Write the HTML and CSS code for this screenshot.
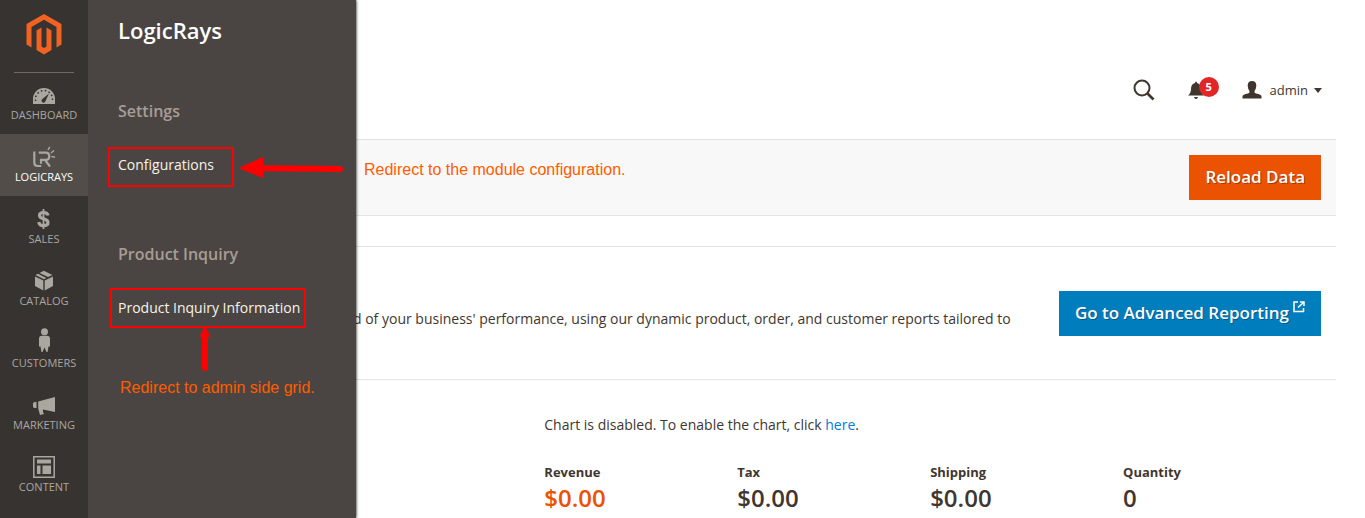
FILE: index.html
```html
<!DOCTYPE html>
<html lang="en">
<head>
<meta charset="utf-8">
<title>Dashboard</title>
<link rel="stylesheet" href="styles.css">
</head>
<body>
<div class="page">
  <aside class="sidebar">
    <a class="logo" href="#" aria-label="Magento">
      <svg width="36" height="41" viewBox="0 0 36 41"><path fill="#f26322" d="M18 0 35.500 10V30.500L30.500 33.500V13L18 5.800 5.500 13V33.500L.500 30.500V10ZM15.500 13.500V32.500L18 34 20.500 32.500V13.500L25.500 16.500V36L18 40.500 10.500 36V16.500Z"/></svg>
    </a>
    <nav>
      <ul class="menu">
        <li><a href="#"><svg class="icon" viewBox="0 0 24 24"><path fill="currentColor" d="M1 21V16A11 11 0 0 1 23 16V21Z"/><path fill="none" stroke="#373330" stroke-width="1.500" stroke-dasharray="1.600 2.400" d="M3.500 18V16A8.500 8.500 0 0 1 20.500 16V18"/><path fill="#373330" d="M17 10.500 13.500 18A2 2 0 1 1 10.700 15.800Z"/></svg>Dashboard</a></li>
        <li class="active"><a href="#"><svg class="icon" viewBox="0 0 24 24"><path fill="none" stroke="currentColor" stroke-width="2.200" d="M2.300 6.500V17.500Q2.300 21 5.500 21H9.200M6.800 7.600H14Q17.300 7.600 17.300 11.200T14 14.800H9V18.800M13 15 18 21.500"/><path fill="none" stroke="currentColor" stroke-width="1.500" d="M16 5 17.800 1.800M19 8 22 5.500M19.500 11.500 23 12.300"/></svg>LogicRays</a></li>
        <li><a href="#"><svg class="icon" viewBox="0 0 24 24"><path fill="none" stroke="currentColor" stroke-width="3.200" d="M16 8.500Q15.500 5.500 11.500 5.500 7.500 5.500 7.500 8.500C7.500 13 16 10.500 16 15.500Q16 18.700 11.500 18.700 7.200 18.700 6.800 15"/><path stroke="currentColor" stroke-width="1.800" d="M11.500 2V22"/></svg>Sales</a></li>
        <li><a href="#"><svg class="icon" viewBox="0 0 24 24"><path fill="currentColor" d="M3 7.500 11.300 11.500V21.500L3 17ZM21 7.500V17L12.700 21.500V11.500ZM3.500 6 6 4.800 14.300 8.900 12 10.200ZM7.500 4 11.800 1.800 20.500 6 16 8.100Z"/></svg>Catalog</a></li>
        <li><a href="#"><svg class="icon person" viewBox="0 0 24 28"><circle cx="12.500" cy="4.700" r="3.500" fill="currentColor"/><path fill="currentColor" d="M10 8.800H15Q18 8.800 18 12V19.500H16.500L15.600 25 14.500 25 12.500 20.500 10.500 25 9.400 25 8.500 19.500H7V12Q7 8.800 10 8.800Z"/></svg>Customers</a></li>
        <li><a href="#"><svg class="icon" viewBox="0 0 24 24"><path fill="currentColor" d="M23 4V19L11 16.500V19L12 21 8 22 6.200 15.500V8.500ZM1 10.500Q1 9 3 9H4.500V15H3Q1 15 1 13.500Z"/></svg>Marketing</a></li>
        <li><a href="#"><svg class="icon" viewBox="0 0 24 24"><path fill="none" stroke="currentColor" stroke-width="1.500" d="M1.800 1.800H22.200V22.200H1.800Z"/><path fill="currentColor" d="M5 4.500H19V8.500H5ZM5 10.500H8.500V19H5ZM10.500 10.500H19V19H10.500Z"/></svg>Content</a></li>
      </ul>
    </nav>
  </aside>

  <section class="flyout">
    <h2 class="flyout-title">LogicRays</h2>
    <div class="group">
      <h3>Settings</h3>
      <a href="#">Configurations</a>
    </div>
    <div class="group">
      <h3>Product Inquiry</h3>
      <a href="#">Product Inquiry Information</a>
    </div>
  </section>

  <main class="content">
    <header class="header">
      <button class="tool search" aria-label="Search"><svg width="22" height="22" viewBox="0 0 22 22"><circle cx="9" cy="9" r="7.500" fill="none" stroke="#41362f" stroke-width="2"/><path stroke="#41362f" stroke-width="2.600" d="M14 14 20.500 20.500"/></svg></button>
      <a class="tool bell" href="#" aria-label="Notifications"><svg width="16" height="18" viewBox="0 0 16 18"><path fill="#41362f" d="M7 2Q7 .500 8 .500T9 2Q13 3 13 8 13 12 16 14.500H0Q3 12 3 8 3 3 7 2ZM6 16H10Q9.500 18 8 18T6 16Z"/></svg><span class="badge">5</span></a>
      <button class="tool account"><svg width="20" height="18" viewBox="0 0 20 18"><path fill="#41362f" d="M10 0Q14.500 0 14.300 5 14 8.500 12.500 10 12 12 14 12.500 19.500 13.500 19.500 15.500V17.500H.500V15.500Q.500 13.500 6 12.500 8 12 7.500 10 6 8.500 5.700 5 5.500 0 10 0Z"/></svg><span>admin</span><svg width="8" height="5" viewBox="0 0 8 5"><path fill="#41362f" d="M0 0H8L4 5Z"/></svg></button>
    </header>
    <div class="actions"><button class="btn primary">Reload Data</button></div>
    <section class="report">
      <p>d of your business' performance, using our dynamic product, order, and customer reports tailored to</p>
      <a class="btn secondary" href="#">Go to Advanced Reporting<svg width="12" height="12" viewBox="0 0 12 12"><path fill="none" stroke="#fff" stroke-width="1.500" d="M5 1H1V10.500H10.500V7M5 6.500 10 2M7 1H11V5"/></svg></a>
    </section>
    <section class="dashboard">
      <div class="stats">
        <p>Chart is disabled. To enable the chart, click <a href="#">here</a>.</p>
        <dl>
          <div class="revenue"><dt>Revenue</dt><dd>$0.00</dd></div>
          <div><dt>Tax</dt><dd>$0.00</dd></div>
          <div><dt>Shipping</dt><dd>$0.00</dd></div>
          <div><dt>Quantity</dt><dd>0</dd></div>
        </dl>
      </div>
    </section>
  </main>

  <svg class="marks" width="356" height="400" viewBox="0 0 356 400">
    <g fill="none" stroke="#f00" stroke-width="2"><path d="M109 148H233V186H109Z"/><path d="M111 289H305V327H111Z"/></g>
    <g fill="#f00"><path d="M238.500 168 263 157V178Z"/><path d="M205 326 210.500 337H199.500Z"/></g>
    <g stroke="#f00" stroke-width="6" stroke-linecap="round"><path d="M262 168.300 340 169"/><path d="M205 336V368"/></g>
  </svg>
  <span class="note note-config">Redirect to the module configuration.</span>
  <span class="note note-grid">Redirect to admin side grid.</span>
</div>
</body>
</html>
```
FILE: styles.css
```css
* { box-sizing: border-box; }
body, h2, h3, p, ul, dl, dd { margin: 0; }
body {
  font: 14px/20px "Open Sans", "Noto Sans", sans-serif;
  color: #41362f;
  background: #fff;
}
a { color: #007bdb; text-decoration: none; }
button { font: inherit; color: inherit; border: 0; padding: 0; background: none; cursor: pointer; }

.page { position: relative; display: flex; min-height: 100vh; overflow: hidden; }

.sidebar { width: 88px; flex: none; background: #373330; z-index: 3; }
.logo { display: flex; justify-content: center; height: 73px; margin: 0 14px; padding-top: 14px; border-bottom: 1px solid #736963; }
.menu { list-style: none; padding: 0; }
.menu a {
  display: flex; flex-direction: column; align-items: center;
  height: 62px; padding-top: 11px;
  font-size: 11px; line-height: 16px; text-transform: uppercase; color: #aaa6a0;
}
.menu li:first-child a { height: 61px; padding-top: 10px; }
.menu .active a { background: #524d49; color: #fff; }
.icon { flex: none; width: 24px; height: 24px; color: #aaa6a0; }
.person { height: 28px; margin-top: -4px; }

.flyout {
  position: absolute; left: 88px; top: 0; bottom: 0; z-index: 2;
  width: 268px; padding: 14px 30px;
  background: #4a4542; box-shadow: 0 0 3px #000;
}
.flyout-title { font-size: 22px; line-height: 32px; font-weight: 600; color: #fff; margin-bottom: 55px; }
.group { height: 143px; }
.group h3 { font-size: 16px; line-height: 20px; font-weight: 600; color: #a79d95; margin-bottom: 34px; }
.group a { color: #f7f3eb; }

.content { flex: 1; min-width: 0; padding: 0 29px 0 30px; }
.header { display: flex; justify-content: flex-end; align-items: center; height: 139px; padding: 41px 14px 0 0; }
.tool { display: flex; align-items: center; }
.search { margin-right: 33px; }
.bell { position: relative; margin-right: 38px; }
.badge {
  position: absolute; left: 11px; top: -4px; width: 20px; height: 20px; border-radius: 50%;
  background: #e22626; color: #fff; font-size: 11px; line-height: 20px; font-weight: 700; text-align: center;
}
.account { font-size: 13px; }
.account span { margin: 0 6px 0 8px; }

.btn {
  display: flex; align-items: center; flex: none; height: 45px; padding: 0 16px 2px;
  font-size: 17px; font-weight: 600; color: #fff; text-shadow: 1px 1px 0 rgba(0, 0, 0, .3);
}
.primary { background: #eb5202; }
.secondary { background: #007dbd; }
.secondary svg { margin: 0 0 12px 4px; }

.actions { display: flex; justify-content: flex-end; padding: 15px; background: #f8f8f8; border: solid #e3e3e3; border-width: 1px 0; }
.report {
  display: flex; justify-content: space-between; align-items: flex-start;
  margin-top: 30px; padding: 44px 15px 43px 235px; border: solid #e3e3e3; border-width: 1px 0;
}
.report p { padding-top: 18px; }
.dashboard { padding: 35px 20px 0 35%; }
.stats dl { display: grid; grid-template-columns: repeat(4, 1fr); margin-top: 28px; }
.stats dt { font-size: 13px; line-height: 18px; font-weight: 700; }
.stats dd { font-size: 24px; line-height: 34px; font-weight: 600; }
.revenue dd { color: #eb5202; }

.marks { position: absolute; left: 0; top: 0; z-index: 4; pointer-events: none; }
.note { position: absolute; z-index: 4; font: 16px/20px "Liberation Sans", Arial, sans-serif; color: #ff5c00; }
.note-config { left: 364px; top: 160px; }
.note-grid { left: 120px; top: 378px; }
```
